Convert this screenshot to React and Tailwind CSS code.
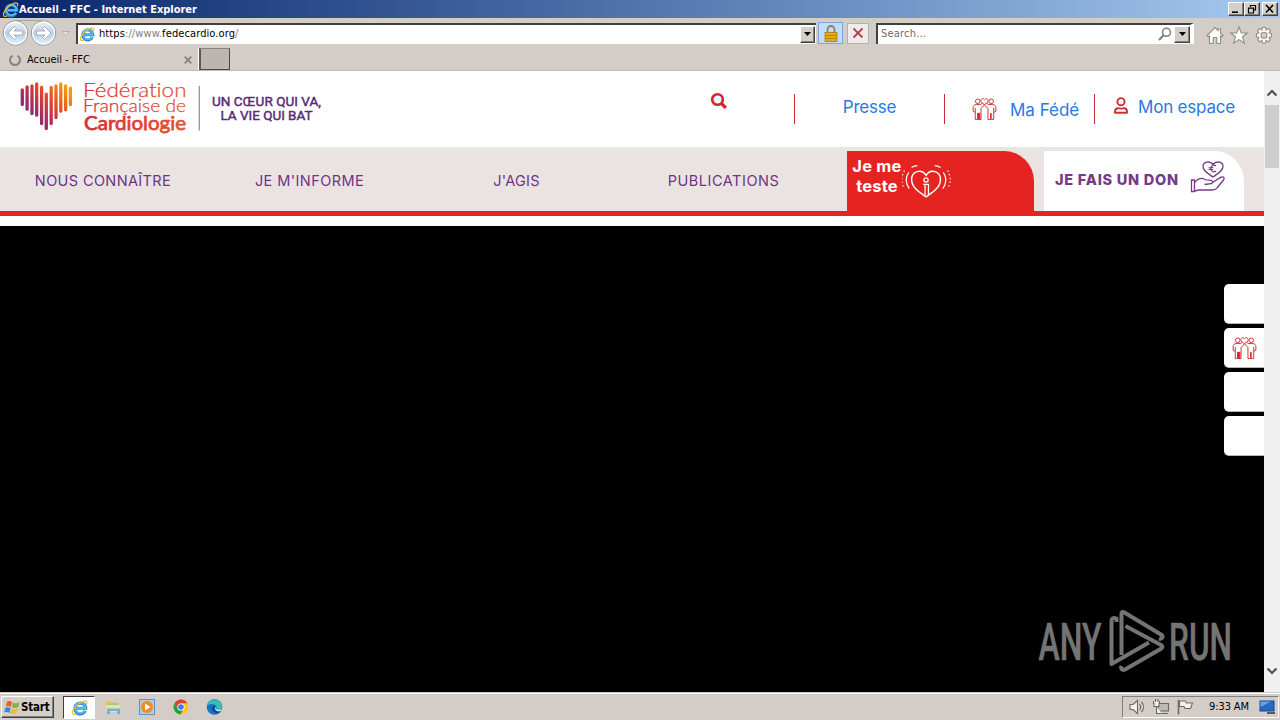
import clsx from "clsx";

const BARS = [
  [22.3, 18.3, 36],
  [27.1, 15.5, 40.7],
  [32, 14.3, 45],
  [36.7, 12.5, 46.7],
  [41.6, 16, 55],
  [46.3, 22.7, 60],
  [51.2, 16, 55],
  [56, 14.3, 49],
  [60.8, 12.5, 42.7],
  [65.6, 14.3, 41.3],
  [70.4, 16.7, 36],
];

const NAV = [
  { label: "NOUS CONNAÎTRE", box: "w-[206px]", text: "tracking-[0.38px]" },
  { label: "JE M'INFORME", box: "w-[207px]", text: "tracking-[0.42px]" },
  { label: "J'AGIS", box: "w-[207px]", text: "tracking-[0.25px]" },
  { label: "PUBLICATIONS", box: "w-[207px]", text: "tracking-[0.52px]" },
];

const RAISED =
  "border border-t-white border-l-white border-r-[#404040] border-b-[#404040] bg-[#d4d0c8] shadow-[inset_-1px_-1px_0_#808080]";

function IeIcon({ size = 16 }) {
  return (
    <svg width={size} height={size} viewBox="0 0 16 16" fill="none" className="shrink-0">
      <path d="M13.4 11.2A5.1 5.1 0 1 1 13.900 8.700H5.400" stroke="#2684cc" strokeWidth="3" />
      <path d="M13 11A4.900 4.900 0 1 1 13.700 8.700H5.400" stroke="#55bdf0" strokeWidth="1.700" />
      <path
        d="M14.700 4.800C15.300 2.400 14.200 1.200 11.400 2.100 7.400 3.500 3 8 1.500 11.600.700 14.400 2.400 15.200 5 13.900"
        stroke="#f0bf2c"
        strokeWidth="1.200"
      />
    </svg>
  );
}

function PeopleIcon() {
  return (
    <svg width="25" height="24" viewBox="0 0 26 24" fill="none" stroke="#d42a2e" strokeWidth="1" className="shrink-0">
      <circle cx="6" cy="4" r="2.4" />
      <circle cx="20" cy="4" r="2.4" />
      <path d="M9.2 3.2C9.600 1 12 .6 13 2.400 14 .6 16.400 1 16.800 3.200 17 5 14.600 6.400 13 7.400 11.400 6.400 9 5 9.200 3.200Z" />
      <path d="M13 7.600 9.400 11.500V23H6.600V16.500H5.800V23H3.400V15.600L1.200 14.400V10.600C1.200 8.600 2.600 7.400 4.400 7.400H8.600L10.600 6.200" />
      <path d="M13 7.600 16.600 11.500V23H19.200V16.500H20V23H22.600V15.600L24.800 14.400V10.600C24.800 8.600 23.400 7.400 21.600 7.400H17.400L15.400 6.200" />
      <path d="M6.200 16.500H8.200V22.600H6.600Z" fill="#d42a2e" />
      <path d="M3.400 10.800V15.600M22.600 10.800V15.600" />
    </svg>
  );
}

function WindowButton({ className, children }) {
  return (
    <div className={clsx("flex h-[14px] w-[16px] items-center justify-center", RAISED, className)}>
      <svg width="12" height="10" viewBox="0 0 12 10" fill="none" stroke="#000" strokeWidth="1.600">
        {children}
      </svg>
    </div>
  );
}

function DropButton({ className }) {
  return (
    <div className={clsx("flex items-center justify-center", RAISED, className)}>
      <svg width="7" height="4" viewBox="0 0 7 4">
        <path d="M0 0H7L3.500 4Z" fill="#000" />
      </svg>
    </div>
  );
}

function TitleBar() {
  return (
    <div className="flex h-[18px] items-center bg-gradient-to-r from-[#0a246a] to-[#a6caf0] pr-[2px] pl-[2px]">
      <IeIcon size={17} />
      <span className="flex-1 pt-px font-['DejaVu_Sans_Condensed','DejaVu_Sans',sans-serif] text-[11px] leading-[17px] font-bold tracking-[-0.02px] text-white">
        Accueil - FFC - Internet Explorer
      </span>
      <WindowButton>
        <path d="M2 8.200H8" />
      </WindowButton>
      <WindowButton>
        <path d="M4.500 3V1.500H9.500V6H7.500M2.500 4.200H7.500V9H2.500Z" strokeWidth="1.200" />
      </WindowButton>
      <WindowButton className="ml-[2px]">
        <path d="M2 1 9 8.500M9 1 2 8.500" />
      </WindowButton>
    </div>
  );
}

function NavArrows() {
  return (
    <svg width="72" height="30" viewBox="0 0 72 30" fill="none" className="shrink-0">
      <defs>
        <linearGradient id="knob" x1="0" y1="0" x2="0" y2="1">
          <stop offset="0" stopColor="#f4f7fb" />
          <stop offset=".5" stopColor="#bccbdf" />
          <stop offset="1" stopColor="#e8f6ff" />
        </linearGradient>
      </defs>
      <path d="M15 2.500H43" stroke="#aaa7a3" />
      {[15.5, 43.5].map((cx) => (
        <g key={cx}>
          <circle cx={cx} cy="15" r="12.200" fill="url(#knob)" stroke="#8c98a8" strokeWidth="1" />
          <circle cx={cx} cy="15" r="11" stroke="#fff" strokeWidth="1.200" />
        </g>
      ))}
      <path d="M14.500 8.500 8 15 14.500 21.500 16.500 19.500 14 17H22.500V13H14L16.500 10.500Z" fill="#fff" stroke="#93a5bb" strokeWidth=".8" />
      <path d="M44.500 8.500 51 15 44.500 21.500 42.500 19.500 45 17H36.500V13H45L42.500 10.500Z" fill="#fff" stroke="#93a5bb" strokeWidth=".8" />
      <path d="M62 13.500H69.500L65.700 17.500Z" fill="#e6e3df" stroke="#aaa7a3" strokeWidth=".8" />
    </svg>
  );
}

function AddressBar() {
  return (
    <div className="flex h-[30px] items-center">
      <NavArrows />
      <div className="ml-1 flex h-[21px] w-[740px] items-center border-t-2 border-l-2 border-t-[#404040] border-l-[#404040] bg-white">
        <div className="ml-px">
          <IeIcon />
        </div>
        <span className="ml-[4px] flex-1 pt-px text-[11px] tracking-[0.1px] text-[#808080]">
          <span className="text-black">https</span>://www.<span className="text-black">fedecardio.org</span>/
        </span>
        <DropButton className="h-[17px] w-[15px]" />
        <div className="w-px" />
      </div>
      <div className="ml-[2px] flex h-[22px] w-[25px] items-center justify-center border border-[#7ea6dc] bg-[#c3dcf9]">
        <svg width="14" height="17" viewBox="0 0 14 17">
          <path d="M3.500 8V4.500A3.500 3.500 0 0 1 10.500 4.500V8" fill="none" stroke="#8b8157" strokeWidth="1.800" />
          <rect x="1" y="7.500" width="12" height="9" fill="#e6ac12" stroke="#a87c10" strokeWidth=".8" />
          <path d="M1.500 10.500H12.500M1.500 13.500H12.500" stroke="#b9860c" />
        </svg>
      </div>
      <div className="ml-[4px] flex h-[21px] w-[22px] items-center justify-center border border-[#b4b1ad] bg-[#eeecea]">
        <svg width="12" height="12" viewBox="0 0 12 12" fill="none">
          <path d="M1.500 1.500 10.500 10.500M10.500 1.500 1.500 10.500" stroke="#b9404a" strokeWidth="1.800" />
        </svg>
      </div>
      <div className="ml-[7px] flex h-[21px] w-[318px] items-center border-t-2 border-r-4 border-l-2 border-t-[#404040] border-r-white border-l-[#404040] bg-white">
        <span className="ml-[3px] flex-1 pt-px text-[11px] tracking-[0.2px] text-[#6d6d6d]">Search...</span>
        <svg width="14" height="14" viewBox="0 0 14 14" fill="none" stroke="#7c7c7c">
          <circle cx="8.500" cy="5.300" r="4" strokeWidth="1.500" />
          <path d="M5.500 8.300 1 13" strokeWidth="2" />
        </svg>
        <DropButton className="ml-[2px] h-[17px] w-[16px]" />
      </div>
      <svg width="68" height="22" viewBox="0 0 68 22" fill="#fff" stroke="#8f8c88" strokeWidth="1.100" className="mt-[5px] ml-[12px]">
        <path d="M1 10.500 9 2.500 12 5.500V4H14.500V8L17 10.500 15.500 12 14.500 11V18.500H10.800V12.500H7.200V18.500H3.500V11L2.500 12Z" />
        <path d="M33 2 35.300 8H41.300L36.500 11.800 38.300 18.200 33 14.600 27.700 18.200 29.500 11.800 24.700 8H30.700Z" />
        <path d="M56.500 2.500H59.500L60 5 62.300 3.600 64.400 5.700 63 8 65.500 8.700V11.700L63 12.300 64.400 14.700 62.300 16.800 60 15.400 59.500 18H56.500L56 15.400 53.700 16.800 51.600 14.700 53 12.300 50.500 11.700V8.700L53 8 51.600 5.700 53.700 3.600 56 5Z" />
        <circle cx="58" cy="10.200" r="3" fill="#d4cdc7" />
      </svg>
    </div>
  );
}

function TabRow() {
  return (
    <div className="flex h-[23px] items-start border-b border-[#c0bab4]">
      <div className="flex h-[22px] w-[199px] items-center border-r border-white pt-px pl-[9px]">
        <svg width="12" height="12" viewBox="0 0 12 12" fill="none">
          <path d="M3.500 1.700A5 5 0 1 0 8.500 1.700" stroke="#858585" strokeWidth="2" />
        </svg>
        <span className="ml-[6px] flex-1 pt-px text-[11px] tracking-[-0.05px] text-black">Accueil - FFC</span>
        <svg width="8" height="8" viewBox="0 0 8 8" className="mr-[6px]">
          <path d="M.7.7 7.300 7.300M7.300.7.7 7.300" stroke="#827f7b" strokeWidth="1.700" />
        </svg>
      </div>
      <div className="h-[22px] w-[31px] border-t border-r border-b border-l-2 border-t-[#8b8580] border-r-[#4b4744] border-b-[#4b4744] border-l-[#5d5955] bg-[#bdb5b0]" />
    </div>
  );
}

function Logo() {
  return (
    <svg width="330" height="76" viewBox="0 1 330 76" className="shrink-0">
      <defs>
        <linearGradient id="heart" gradientUnits="userSpaceOnUse" x1="26" y1="50" x2="64" y2="16">
          <stop offset="0" stopColor="#6b2a80" />
          <stop offset=".3" stopColor="#a82c5e" />
          <stop offset=".62" stopColor="#e4472a" />
          <stop offset="1" stopColor="#f59a0c" />
        </linearGradient>
        <linearGradient id="name" gradientUnits="userSpaceOnUse" x1="84" y1="0" x2="186" y2="0">
          <stop offset="0" stopColor="#dc2a35" />
          <stop offset="1" stopColor="#e4562f" />
        </linearGradient>
      </defs>
      <g stroke="url(#heart)" strokeWidth="3.300" strokeLinecap="round">
        {BARS.map(([x, top, bottom]) => (
          <path key={x} d={`M${x} ${top + 1.5}L${x + 0.01} ${bottom - 1.5}`} />
        ))}
      </g>
      <g fill="url(#name)" stroke="url(#name)" strokeWidth=".25" fontFamily="Lato, sans-serif" className="[font-variant-ligatures:none]">
        <text x="83" y="27" fontSize="20" fontWeight="300" textLength="103.500" lengthAdjust="spacingAndGlyphs">
          Fédération
        </text>
        <text x="83" y="41.500" fontSize="17.500" fontWeight="300" textLength="103" lengthAdjust="spacingAndGlyphs">
          Française de
        </text>
        <text x="84" y="60.300" fontSize="20" fontWeight="400" strokeWidth=".75" textLength="102" lengthAdjust="spacingAndGlyphs">
          Cardiologie
        </text>
      </g>
      <path d="M199.300 16V60.500" stroke="#8c8c8c" strokeWidth="1.200" />
      <g fill="#59297a" stroke="#59297a" strokeWidth=".45" fontFamily="Roboto, sans-serif" fontSize="13.500" fontWeight="400">
        <text x="212" y="35.800" textLength="109">UN CŒUR QUI VA,</text>
        <text x="220.500" y="49.600" textLength="92">LA VIE QUI BAT</text>
      </g>
    </svg>
  );
}

function SiteHeader() {
  return (
    <header className="flex h-[76px] shrink-0 bg-white font-[Inter,sans-serif] text-[17px] text-[#2878e6]">
      <Logo />
      <div className="ml-[380px] w-[84px] pt-[21px]">
        <svg width="18" height="18" viewBox="0 0 18 18" fill="none" stroke="#d02530">
          <circle cx="7.500" cy="7.500" r="5.300" strokeWidth="2.600" />
          <path d="M11.500 11.500 15.800 15.800" strokeWidth="3.200" />
        </svg>
      </div>
      <div className="mt-[23px] flex h-[30px] w-[150px] justify-center border-l border-[#c92c3a]">
        <span className="leading-[26px] tracking-[-0.2px]">Presse</span>
      </div>
      <div className="mt-[23px] flex h-[30px] w-[150px] items-center border-l border-[#c92c3a] pl-[27px]">
        <PeopleIcon />
        <span className="ml-[13px] pt-[3px] whitespace-nowrap">Ma Fédé</span>
      </div>
      <div className="mt-[23px] flex h-[30px] border-l border-[#c92c3a] pl-[19px]">
        <svg width="14" height="17" viewBox="0 0 14 17" fill="none" stroke="#cf3038" strokeWidth="1.900" className="mt-[3px]">
          <circle cx="7" cy="4.700" r="3.600" />
          <path
            d="M1 15.800V14.500C1 12.400 2.300 11.200 4.200 11.200 5.200 11.200 5.800 11.600 7 11.600S8.800 11.200 9.800 11.200C11.700 11.200 13 12.400 13 14.500V15.800Z"
            strokeLinejoin="round"
          />
        </svg>
        <span className="ml-[10px] leading-[26px] tracking-[-0.2px] whitespace-nowrap">Mon espace</span>
      </div>
    </header>
  );
}

function SiteNav() {
  return (
    <nav className="flex h-[69px] shrink-0 border-t-4 border-b-5 border-t-[#e8e5e2] border-b-[#e52421] bg-[#ebe3e2] font-[Inter,sans-serif]">
      <div className="flex w-[847px] text-[14.5px] leading-[60px] text-[#6b3484]">
        {NAV.map((item) => (
          <span key={item.label} className={clsx("text-center", item.box, item.text)}>
            {item.label}
          </span>
        ))}
      </div>
      <div className="flex h-[60px] w-[187px] rounded-tr-[30px] bg-[#e52421] pl-[5px] text-white">
        <span className="w-[50px] pt-[5px] text-center text-[16.5px] leading-[20px] font-bold tracking-[0.2px] whitespace-nowrap">
          Je me
          <br />
          teste
        </span>
        <svg width="50" height="38" viewBox="1 0 52 38" fill="none" stroke="#fff" strokeWidth="1.500" className="mt-[11px]">
          <path d="M26 35.500C18 30 11 25.500 11 17.500 11 9 21 5.500 26 13 31 5.500 41 9 41 17.500 41 25.500 34 30 26 35.500Z" />
          <path d="M8 10C4.500 15 4.500 21 8.500 27M44 10C47.500 15 47.500 21 43.500 27" strokeWidth="1.200" />
          <path d="M3.500 8C0 15 0 20 3 26M48.500 8C52 15 52 20 49 26" strokeDasharray="1.500 2.500" strokeWidth="1.200" />
          <path d="M11 5C13 3.500 15 3 17 3M35 3C37 3 39 3.500 41 5" strokeWidth="1.200" />
          <circle cx="26" cy="18" r="2.200" strokeWidth="1.300" />
          <path d="M23 22.500H28.500V34M25 23V34" strokeWidth="1.300" />
        </svg>
      </div>
      <div className="ml-[10px] flex h-[60px] w-[200px] rounded-tr-[30px] bg-white pl-[11px] text-[#763a87]">
        <span className="w-[125px] text-[14.5px] leading-[58px] font-extrabold tracking-[0.75px] whitespace-nowrap">
          JE FAIS UN DON
        </span>
        <svg width="36" height="34" viewBox="0 0 36 34" fill="none" stroke="#763a87" strokeWidth="1.300" className="mt-[9px] ml-[10px]">
          <path d="M23 17C18 13.500 13 11 13 6.500 13 1.500 20 .5 23 4.500 26 .5 33 1.500 33 6.500 33 11 28 13.500 23 17Z" />
          <path d="M26 6A3.200 3.200 0 1 0 26 11M18.500 7.800H23.500M18.500 9.500H23" strokeWidth="1.100" />
          <path d="M1.500 20H4.500V31.500H1.500ZM4.500 22.500C8 18.500 12 17.500 15 19.500 16.500 20.500 20 20 21.500 20.500 23.500 21.500 22.500 23.500 21 23.700L14.500 24.500M22.500 22.500 31 17.200C33.500 16.200 35 18 33.500 20L27 28C26 29.500 24 30 22 30H9L4.500 31" />
        </svg>
      </div>
    </nav>
  );
}

function Watermark() {
  return (
    <svg width="200" height="64" viewBox="0 0 200 64" fill="none">
      <g fill="#747474" stroke="#747474" strokeWidth=".5" fontFamily="Roboto, sans-serif" fontSize="51.500" fontWeight="500">
        <text x="1.500" y="50.500" textLength="63" lengthAdjust="spacingAndGlyphs">ANY</text>
        <text x="132" y="50.500" textLength="63" lengthAdjust="spacingAndGlyphs">RUN</text>
      </g>
      <g stroke="#747474" strokeWidth="4" strokeLinejoin="round">
        <path d="M79.500 13V9.500C76 8 74.500 10 74.500 12V55L112 33.500" />
        <path d="M84.500 46V4.500C84.500 3 85.500 2.500 87 3.300L124 25.500C127 27.500 125 30.500 122 29.500" />
        <path d="M88.500 17 124 36C126 37.200 126 38.500 124 39.700L88 60.500C85 62 83.500 59.500 84.500 57" />
      </g>
    </svg>
  );
}

function Scrollbar() {
  return (
    <div className="flex h-[621px] w-[16px] flex-col items-center bg-[#f0f0f0]">
      <svg width="12" height="8" viewBox="0 0 12 8" fill="none" className="mt-[18px]">
        <path d="M1.500 6.500 6 2 10.500 6.500" stroke="#505050" strokeWidth="2.200" />
      </svg>
      <div className="mt-[8px] h-[63px] w-[14px] bg-[#cdcdcd]" />
      <svg width="12" height="8" viewBox="0 0 12 8" fill="none" className="mt-auto mb-[17px]">
        <path d="M1.500 1.500 6 6 10.500 1.500" stroke="#505050" strokeWidth="2.200" />
      </svg>
    </div>
  );
}

function Page() {
  return (
    <div className="flex h-[621px]">
      <div className="flex w-[1264px] flex-col bg-white">
        <SiteHeader />
        <SiteNav />
        <main className="mt-[10px] flex flex-1 flex-col items-end bg-black pt-[58px]">
          {[0, 1, 2, 3].map((i) => (
            <div
              key={i}
              className="mb-[4px] flex h-[40px] w-[40px] items-center justify-center rounded-l-[5px] border-b border-[#b5b5b5] bg-white"
            >
              {i === 1 && <PeopleIcon />}
            </div>
          ))}
          <div className="mt-auto mr-[27px] mb-[19px]">
            <Watermark />
          </div>
        </main>
      </div>
      <Scrollbar />
    </div>
  );
}

function Taskbar() {
  return (
    <div className="flex h-[28px] items-center border-t border-[#d4cdc7] bg-[#d4cdc7] pt-px shadow-[inset_0_1px_0_#fff]">
      <div className={clsx("ml-px flex h-[22px] w-[53px] items-center pl-[2px]", RAISED)}>
        <svg width="17" height="17" viewBox="0 0 17 17" className="shrink-0">
          <path d="M3 2.500C5 1.500 6.500 2 8.200 3L7 8C5.300 7 3.800 6.800 1.800 7.500Z" fill="#e4612a" />
          <path d="M9.200 3.500C11 4.500 13 4.500 15.500 3.300L14.200 8.300C12 9.300 10 9.300 8 8.400Z" fill="#7bb642" />
          <path d="M1.500 8.600C3.500 7.800 5 8.200 6.700 9.100L5.500 14C3.800 13 2.200 12.800.2 13.500Z" fill="#3a86d0" />
          <path d="M7.700 9.500C9.700 10.400 11.600 10.400 13.900 9.400L12.600 14.300C10.500 15.300 8.300 15.200 6.400 14.400Z" fill="#f3bd28" />
        </svg>
        <span className="pt-px text-[11.5px] font-bold tracking-[-0.2px] text-black">Start</span>
      </div>
      <div className="ml-[9px] flex h-[23px] w-[32px] items-center justify-center border border-t-[#404040] border-r-white border-b-white border-l-[#404040] bg-white">
        <IeIcon size={17} />
      </div>
      <svg width="16" height="16" viewBox="0 0 16 16" className="ml-[10px]">
        <path d="M1 2H6L7 3.500H14V8H1Z" fill="#e6c660" />
        <rect x="2.500" y="4" width="10" height="4" fill="#9fce8a" />
        <path d="M1 6H15V13H1Z" fill="#f4df93" />
        <path d="M2 9.500H15V15H12V12H5V15H2Z" fill="#6fb4dc" />
      </svg>
      <svg width="16" height="16" viewBox="0 0 16 16" className="ml-[18px]">
        <rect x=".5" y=".5" width="15" height="15" fill="#a9cdea" stroke="#5e94c4" />
        <circle cx="8" cy="8" r="6" fill="#f28b1d" />
        <path d="M6 4.500 11.500 8 6 11.500Z" fill="#fff" />
      </svg>
      <svg width="16" height="16" viewBox="0 0 16 16" className="ml-[18px]">
        <circle cx="8" cy="8" r="7.500" fill="#f9c623" />
        <path d="M1.500 4.200A7.500 7.500 0 0 1 14.500 4.300H8L4.800 9.900Z" fill="#dd4132" />
        <path d="M1.500 4.200 4.800 9.900 8 11.500H9.800L7.500 15.500A7.500 7.500 0 0 1 1.500 4.200Z" fill="#27a045" />
        <circle cx="8" cy="8" r="3.600" fill="#fff" />
        <circle cx="8" cy="8" r="2.800" fill="#3f7ee8" />
      </svg>
      <svg width="17" height="16" viewBox="0 0 17 16" className="ml-[17px]">
        <circle cx="8.500" cy="8" r="7.800" fill="#1574c4" />
        <path d="M.8 7A7.800 7.800 0 0 1 16.200 7.500C16.300 10 14 11 11.500 10.500 9.500 10 11 9 10.500 7.500 9.500 4.500 4 4 .8 7Z" fill="#36bfb0" />
        <path d="M5.800 9C6 6.500 8 5.800 9.500 6.300 8.500 7.500 8.300 9.500 10 11 12 12.300 14 12 15.300 11.500 13 16 6 14.500 5.800 9Z" fill="#0c4f9a" />
        <path d="M9.700 8C9 10 11.500 11.200 14.500 10.500L15.800 10.300 15 12C12 13 9 11.500 9 9.200Z" fill="#dfeaf0" />
      </svg>
      <div className="mr-[1px] ml-auto flex h-[22px] w-[157px] items-center border border-t-[#808080] border-r-white border-b-white border-l-[#808080] pl-[5px]">
        <svg width="68" height="18" viewBox="0 0 68 18" fill="#f3f1ee" stroke="#6c6966" strokeWidth="1.100">
          <path d="M2 6.500H5L9.500 2.500V15.500L5 11.500H2Z" />
          <path d="M11.500 6C13 7.800 13 10.200 11.500 12M13.500 4C16.300 7 16.300 11 13.500 14" fill="none" />
          <path d="M30 5.500H40.500V13H30Z M32 15.500H40" fill="#bdbab6" />
          <path d="M25.500 3V5.500H26V8.500H31V5.500H31.500V3M28.500 8.500V15.500H34M27.500 1V4M30 1V4" />
          <path d="M50.500 2V16.500" strokeWidth="1.600" />
          <path d="M51.500 3H57.500L58.500 5H64.500L62.500 10.500H57L56 8.500H51.500Z" />
        </svg>
        <span className="ml-[13px] pt-px text-[11px] tracking-[-0.1px] whitespace-nowrap text-black">9:33 AM</span>
        <svg width="17" height="14" viewBox="0 0 17 14" className="mr-[2px] ml-auto">
          <rect x="1" y="1" width="14" height="10" fill="#2569c4" stroke="#164790" />
          <path d="M1.500 1.500H12L1.500 7Z" fill="#68a4e4" />
          <path d="M8 13H16" stroke="#333" strokeWidth="1.500" />
        </svg>
      </div>
    </div>
  );
}

export default function App() {
  return (
    <div className="h-[720px] w-[1280px] overflow-hidden bg-[#d4cdc7] font-['DejaVu_Sans_Condensed','DejaVu_Sans',sans-serif]">
      <TitleBar />
      <AddressBar />
      <TabRow />
      <Page />
      <Taskbar />
    </div>
  );
}
